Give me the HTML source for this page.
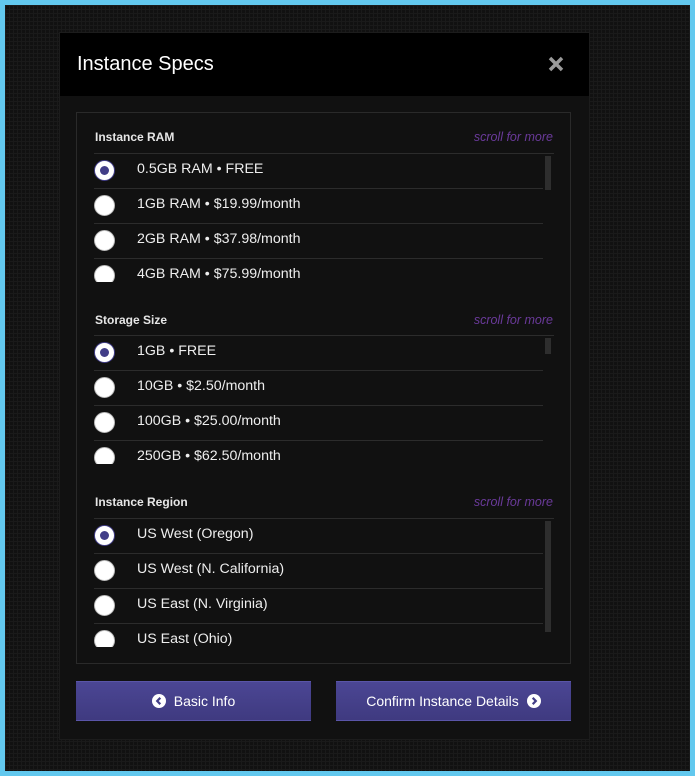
<!DOCTYPE html>
<html><head><meta charset="utf-8"><style>
*{box-sizing:border-box;margin:0;padding:0}
html,body{width:695px;height:776px;overflow:hidden}
body{background:#62c8ee;font-family:"Liberation Sans",Arial,sans-serif;position:relative}
.bg{position:absolute;left:5px;top:5px;width:685px;height:766px;background-color:#111;
background-image:linear-gradient(#1a1a1a 1px,transparent 1px),linear-gradient(90deg,#1a1a1a 1px,transparent 1px);background-size:4px 4px}
.modal{position:absolute;left:59px;top:32px;width:531px;height:708px;background:#111;border:1px solid #1c1c1c}
.hdr{position:absolute;left:0;top:0;width:529px;height:63px;background:#000}
.hdr h1{position:absolute;left:17px;top:20px;font-size:20px;font-weight:normal;color:#fff}
.x{position:absolute;left:488px;top:23px}
.box{position:absolute;left:16px;top:79px;width:495px;height:552px;border:1px solid #2a2a2a}
.t{position:absolute;left:18px;font-size:12px;font-weight:bold;color:#e6e6e6}
.s{position:absolute;right:17px;font-size:12.5px;font-style:italic;color:#6a3a9a}
.list{position:absolute;left:17px;width:460px;height:129px;overflow:hidden;border-top:1px solid #2c2c2c}
.row{height:35px;border-bottom:1px solid #2c2c2c;position:relative;width:449px}
.row span{position:absolute;left:43px;top:7px;font-size:14.2px;color:#eee}
.r{position:absolute;left:0;top:6px;width:21px;height:21px;border-radius:50%;background:#fff;border:1px solid #bbb}
.r.on::after{content:"";position:absolute;left:5px;top:5px;width:9px;height:9px;border-radius:50%;background:#423e88}
.r.on{border:1px solid #423e88}
.sb{position:absolute;left:451px;width:6px;background:#2e2e2e}
.btn{position:absolute;top:648px;width:235px;height:40px;background:linear-gradient(#4b4694,#3f3a80);border-top:1px solid #5a55a8;border-bottom:1px solid #5a55a8;color:#fff;font-size:14px;display:flex;align-items:center;justify-content:center;gap:8px}
.btn svg{display:block}
</style></head><body>
<div class="bg"></div>
<div class="modal">
<div class="hdr"><h1>Instance Specs</h1>
<svg class="x" width="16" height="16" viewBox="0 0 16 16"><path d="M2 2L14 14M14 2L2 14" stroke="#9a9a9a" stroke-width="3.5"/></svg></div>
<div class="box">
<div class="t" style="top:17px">Instance RAM</div><div class="s" style="top:17px">scroll for more</div>
<div class="list" style="top:40px"><div class="sb" style="top:2px;height:34px"></div>
<div class="row"><div class="r on"></div><span>0.5GB RAM • FREE</span></div>
<div class="row"><div class="r"></div><span>1GB RAM • $19.99/month</span></div>
<div class="row"><div class="r"></div><span>2GB RAM • $37.98/month</span></div>
<div class="row"><div class="r"></div><span>4GB RAM • $75.99/month</span></div>
</div>
<div class="t" style="top:200px">Storage Size</div><div class="s" style="top:200px">scroll for more</div>
<div class="list" style="top:222px"><div class="sb" style="top:2px;height:16px"></div>
<div class="row"><div class="r on"></div><span>1GB • FREE</span></div>
<div class="row"><div class="r"></div><span>10GB • $2.50/month</span></div>
<div class="row"><div class="r"></div><span>100GB • $25.00/month</span></div>
<div class="row"><div class="r"></div><span>250GB • $62.50/month</span></div>
</div>
<div class="t" style="top:382px">Instance Region</div><div class="s" style="top:382px">scroll for more</div>
<div class="list" style="top:405px"><div class="sb" style="top:2px;height:111px"></div>
<div class="row"><div class="r on"></div><span>US West (Oregon)</span></div>
<div class="row"><div class="r"></div><span>US West (N. California)</span></div>
<div class="row"><div class="r"></div><span>US East (N. Virginia)</span></div>
<div class="row"><div class="r"></div><span>US East (Ohio)</span></div>
</div>
</div>
<div class="btn" style="left:16px"><svg width="14" height="14" viewBox="0 0 14 14"><circle cx="7" cy="7" r="7" fill="#fff"/><path d="M8.3 3.8L5.2 7L8.3 10.2" stroke="#433e88" stroke-width="2.2" fill="none"/></svg><span>Basic Info</span></div>
<div class="btn" style="left:276px"><span>Confirm Instance Details</span><svg width="14" height="14" viewBox="0 0 14 14"><circle cx="7" cy="7" r="7" fill="#fff"/><path d="M5.7 3.8L8.8 7L5.7 10.2" stroke="#433e88" stroke-width="2.2" fill="none"/></svg></div>
</div>
</body></html>
